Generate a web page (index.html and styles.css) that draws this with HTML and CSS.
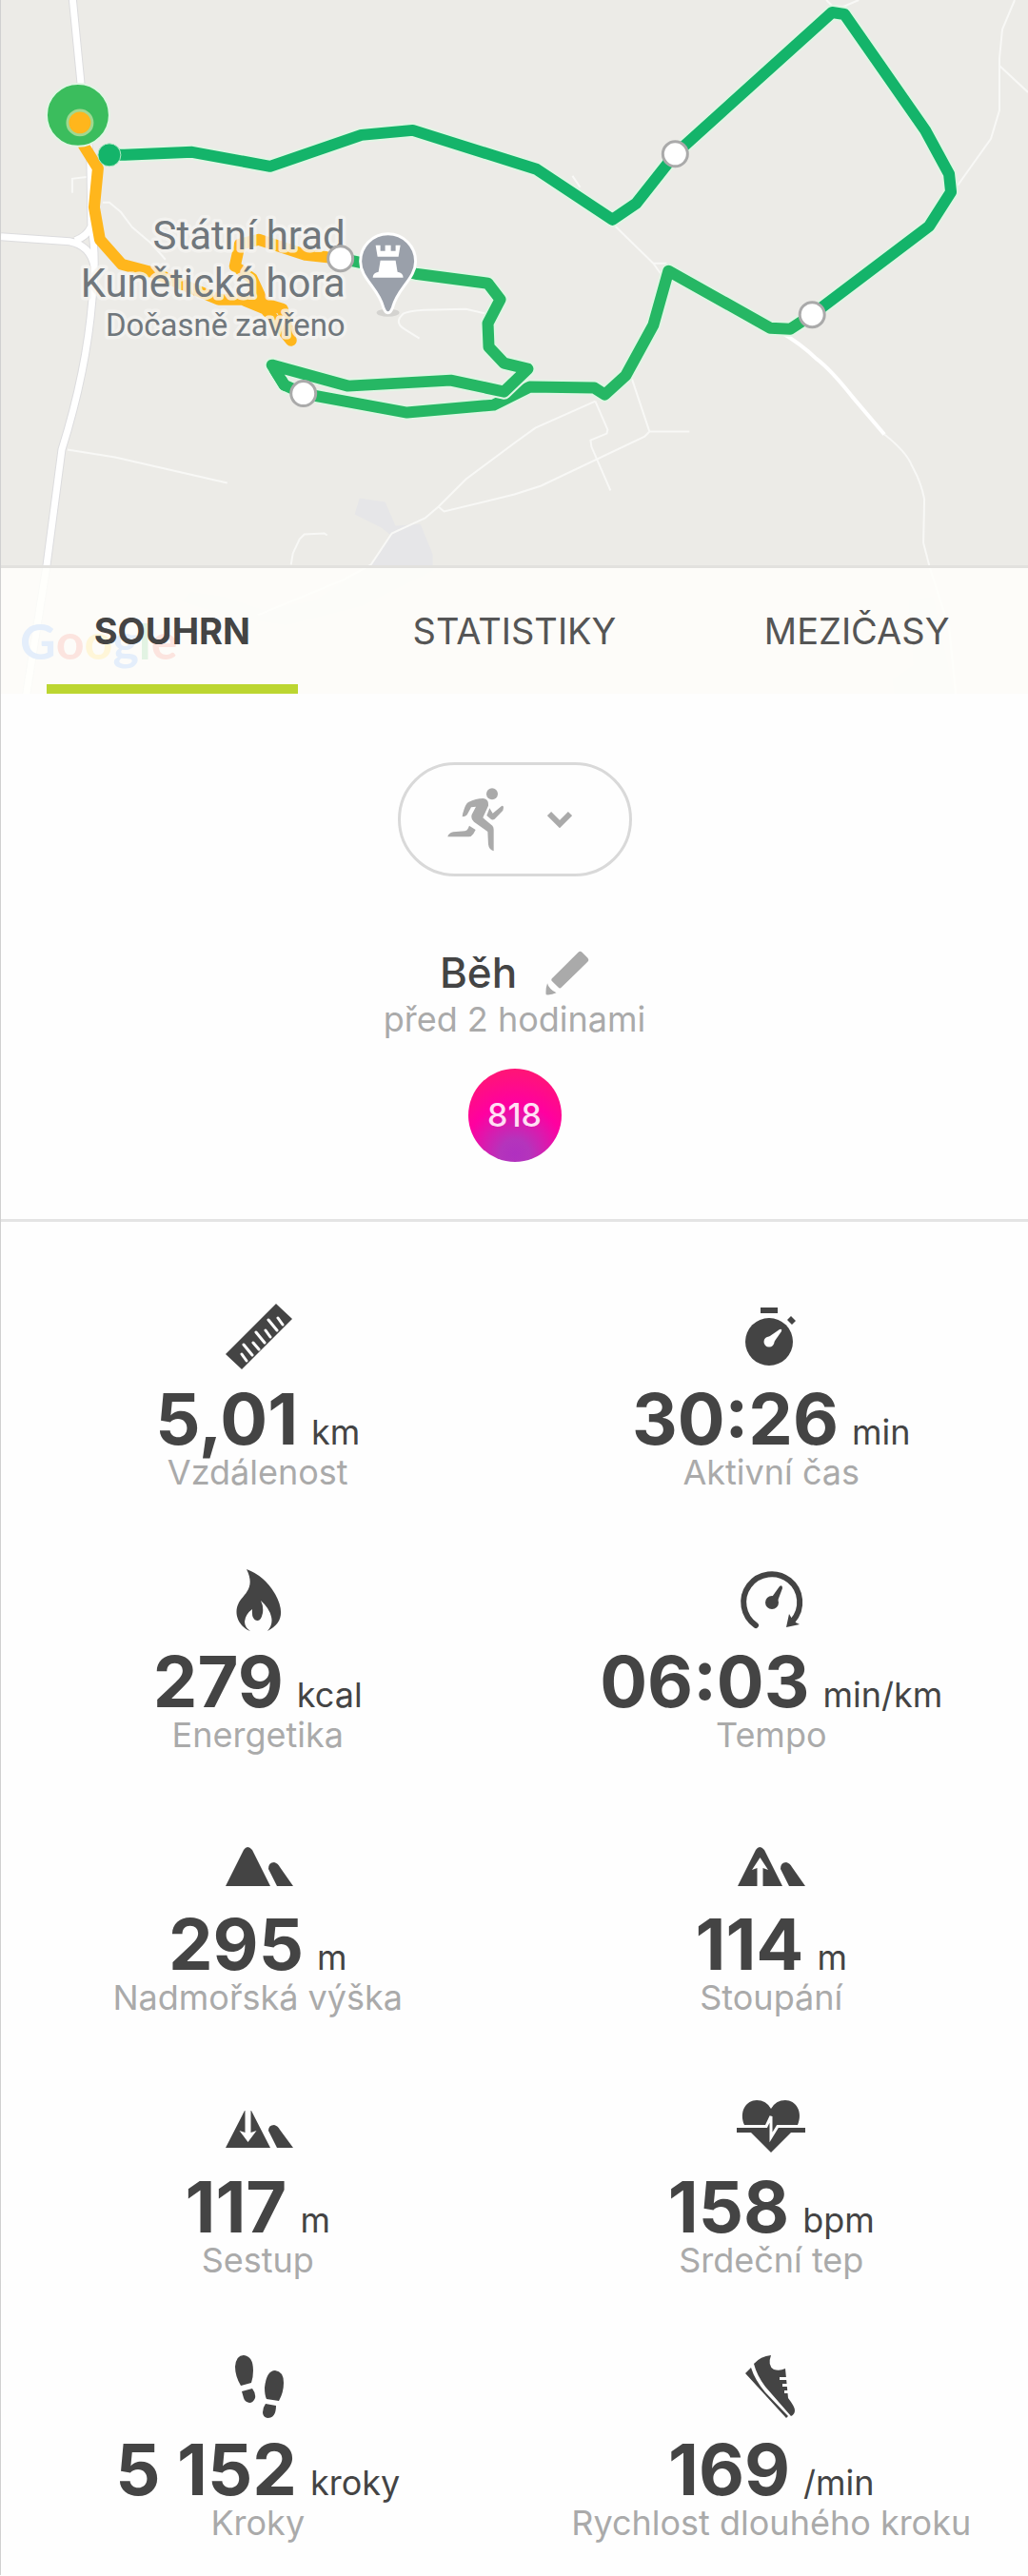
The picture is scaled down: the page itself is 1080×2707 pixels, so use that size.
FILE: index.html
```html
<!DOCTYPE html>
<html lang="cs">
<head>
    <meta charset="UTF-8">
    <meta name="viewport" content="width=device-width, initial-scale=1.0">
    <title>Běh - Souhrn</title>
    <link rel="stylesheet" href="styles.css">
</head>
<body>
    <header class="map">
        <svg class="map-canvas" viewBox="0 0 1080 730" role="img" aria-label="Mapa trasy">
            <!-- water -->
            <path class="water" d="M377 524L404 528L415 553L441 551L454 583L454 600L379 637L300 657L240 648L190 632L200 623L235 628L275 642L330 632L389 594L410 563L400 555L372 541Z"/>
            <path class="water" d="M955 632L980 628L1002 730L940 730L938 715L960 700Z"/>

            <!-- paths and roads -->
            <g class="path">
                <path d="M75 203V188L92 186M107 213H114L126 223L138 239L158 256L173 273"/>
                <path d="M440 356L424 346Q413 339 423 330Q428 327 445 326L489 325L510 330"/>
                <path d="M1066 0L1053 31L1050 61V116L1041 146L1006 195M1050 69L1080 97"/>
                <path d="M868 0L874 6L886 7L902 0M601 185L609 197M645 237L686 277H700M686 277L696 291"/>
                <path d="M625 422L562 450L540 466L489 504L460 533L446 545L411 561L389 594L360 610L270 647"/>
                <path d="M625 422L638 452L637 456L620 463L621 470L641 516"/>
                <path d="M663 397L674 430L682 454H724M682 454L677 459L568 511L540 520L466 538L460 533"/>
                <path d="M305 594L307 582L314 567L319 562L340 561L343 563M70 473L120 481L238 508"/>
                <path d="M929 457Q952 475 958 490Q968 508 971 525L970 571L977 598L997 660L1004 730"/>
            </g>
            <path class="lane" d="M818 348Q842 362 857 377Q872 388 895 417L929 457"/>
            <path class="road-edge" d="M75 -5L84 87L94 168L95 240Q101 268 96 315Q90 390 64 473L48 595L26 735M0 249L72 254Q94 258 98 280M78 253Q90 249 95 238"/>
            <path class="road" d="M75 -5L84 87L94 168L95 240Q101 268 96 315Q90 390 64 473L48 595L26 735M0 249L72 254Q94 258 98 280M78 253Q90 249 95 238"/>

            <!-- recorded track -->
            <polyline class="track-halo" points="114,163 130,163 201,160 283,175 379,142 433,137 563,178 643,231 668,214 709,162 874,13 887,15 972,137 997,183 999,202 976,238 853,331 830,346 809,345 702,285 686,342 657,395 635,415 624,408 556,407 518,426 427,434 318,414 298,405 285,384"/>
            <polyline class="track track-green" points="114,163 130,163 201,160 283,175 379,142 433,137 563,178 643,231 668,214 709,162 874,13 887,15 972,137 997,183 999,202 976,238 853,331"/>
            <polyline class="track track-light" points="853,331 830,346 809,345 702,285 686,342 657,395 635,415 624,408 556,407 518,426 427,434 318,414 298,405 285,384"/>
            <polyline class="track-halo" points="285,384 365,406 473,400 529,412 554,388 529,382 513,365 512,340 525,315 512,298 436,288 357,272"/>
            <polyline class="track track-light" points="298,405 285,384 365,406 473,400 529,412 554,388 529,382 513,365 512,340 525,315 512,298 436,288 357,272"/>
            <polyline class="track track-orange" points="357,272 320,268 271,252 251,257 246,280 264,293 276,319 296,325 305,358 278,325 254,315 229,315 161,287 127,278 104,252 98,218 102,177 87,153 83,129"/>
            <circle class="start" cx="81" cy="121" r="33"/>
            <circle class="start-dot" cx="83" cy="129" r="13"/>
            <circle class="finish-dot" cx="114" cy="163" r="12"/>

            <!-- castle label and pin -->
            <g class="place" text-anchor="end">
                <text x="362" y="262">Státní hrad</text>
                <text x="362" y="312">Kunětická hora</text>
                <text class="place-note" x="362" y="353">Dočasně zavřeno</text>
            </g>
            <ellipse class="pin-shadow" cx="407" cy="329" rx="12" ry="4"/>
            <path class="pin" d="M407 329Q404 329 402 323C397 303 378 293 378 275A29 29 0 0 1 436 275C436 293 417 303 412 323Q410 329 407 329Z"/>
            <path class="pin-castle" d="M394 258H399V264H404V258H410V264H415V258H420L418 270H396ZM399 274H415L417 286Q423 287 423 292H391Q391 287 397 286Z"/>

            <g class="km">
                <circle cx="357" cy="272" r="13"/>
                <circle cx="318" cy="414" r="13"/>
                <circle cx="709" cy="162" r="13"/>
                <circle cx="853" cy="331" r="13"/>
            </g>

            <text class="google" x="20" y="694"><tspan class="blue">G</tspan><tspan class="red">o</tspan><tspan class="yellow">o</tspan><tspan class="blue">g</tspan><tspan class="green">l</tspan><tspan class="red">e</tspan></text>
        </svg>
        <nav class="tabs">
            <button class="tab active" type="button">SOUHRN</button>
            <button class="tab" type="button">STATISTIKY</button>
            <button class="tab" type="button">MEZIČASY</button>
        </nav>
    </header>

    <section class="summary">
        <div class="sport">
            <select class="sport-select" aria-label="Sport">
                <option value="run" aria-label="Běh" selected></option>
            </select>
            <svg class="sport-icon" viewBox="0 0 180 200">
                <circle cx="141" cy="19" r="18"/>
                <path d="M66 45Q90 33 112 33Q131 35 129 56L112 94L142 119Q146 123 146 131V199Q131 195 129 178L127 138L84 107Q73 99 77 84L90 59L75 61L62 85Q57 91 47 91Q47 83 51 73Q57 51 66 45Z"/>
                <path d="M133 64L143 80L171 57Q177 55 177 62L175 71L149 98Q143 102 138 99L124 87Z"/>
                <path d="M69 119L89 132L82 145Q76 154 67 154H1Q3 143 18 139L55 136Q62 134 65 128Z"/>
            </svg>
            <svg class="sport-arrow" viewBox="0 0 26 18"><path d="M2 3L13 14L24 3"/></svg>
        </div>
        <div class="title-row">
            <h1>Běh</h1>
            <button class="edit" type="button" aria-label="Upravit">
                <svg viewBox="0 0 136 138">
                    <path d="M102 5Q108 0 114 5L131 22Q137 29 131 35L50 114Q45 119 40 114L21 95Q16 91 21 86Z"/>
                    <path d="M6 101Q10 118 34 131Q18 139 2 137Q0 118 6 101Z"/>
                </svg>
            </button>
        </div>
        <p class="time">před 2 hodinami</p>
        <span class="score">818</span>
    </section>

    <main class="stats">
        <div class="stat">
            <svg class="icon" viewBox="0 0 72 72">
                <path d="M55 2L72 18L19 71L2 55Z"/>
                <path class="cut" d="M19 55L24 62M21 45L30 56M31 43L37 50M34 32L43 43M44 30L49 37M47 19L56 30M57 17L62 24"/>
            </svg>
            <p class="value">5,01<span class="unit">km</span></p>
            <p class="label">Vzdálenost</p>
        </div>
        <div class="stat">
            <svg class="icon" viewBox="0 0 72 72">
                <circle cx="34" cy="42" r="25"/>
                <path d="M25 6H43V12H25ZM57 15L62 20L58 24L53 19Z"/>
                <circle class="hole" cx="34" cy="42" r="5.5"/>
                <path class="hole" d="M32 38L45 29Q48 28 47 31L38 44Z"/>
            </svg>
            <p class="value">30:26<span class="unit">min</span></p>
            <p class="label">Aktivní čas</p>
        </div>
        <div class="stat">
            <svg class="icon" viewBox="0 0 72 72">
                <path d="M24 5Q43 12 54 31C64 49 62 62 46 70Q52 63 50 55Q48 46 39 38Q42 44 41 51Q39 60 35 59Q29 58 30 47Q23 52 22 60Q22 66 28 70C15 65 10 51 16 40C21 31 34 25 24 5Z"/>
            </svg>
            <p class="value">279<span class="unit">kcal</span></p>
            <p class="label">Energetika</p>
        </div>
        <div class="stat">
            <svg class="icon" viewBox="0 0 72 72">
                <path class="line" d="M20 64A29.5 29.5 0 1 1 59 59"/>
                <path d="M52 66L55 52L58 57L62 61L66 63Z"/>
                <circle cx="37" cy="40" r="7"/>
                <path d="M35 37L45 23Q48 21 48 25L42 41Z"/>
            </svg>
            <p class="value">06:03<span class="unit">min/km</span></p>
            <p class="label">Tempo</p>
        </div>
        <div class="stat">
            <svg class="icon" viewBox="0 0 72 72">
                <path d="M2 62L21 24Q25 18 30 24L49 62ZM56 62L47 44Q47 37 53 37Q57 38 59 42L73 62Z"/>
            </svg>
            <p class="value">295<span class="unit">m</span></p>
            <p class="label">Nadmořská výška</p>
        </div>
        <div class="stat">
            <svg class="icon" viewBox="0 0 72 72">
                <path d="M1 62L20 24Q24 18 29 24L48 62ZM55 62L46 44Q46 37 52 37Q56 38 58 42L72 62Z"/>
                <path class="hole" d="M24.5 32L33 45L27.5 43V63H21.5V43L16 45Z"/>
            </svg>
            <p class="value">114<span class="unit">m</span></p>
            <p class="label">Stoupání</p>
        </div>
        <div class="stat">
            <svg class="icon" viewBox="0 0 72 72">
                <path d="M2 61L22 22H29L49 61ZM56 61L47 43Q47 37 53 37Q57 38 59 42L73 61Z"/>
                <path class="hole" d="M25.5 55L16.5 43L22.5 45V20H28.5V45L34.5 43Z"/>
            </svg>
            <p class="value">117<span class="unit">m</span></p>
            <p class="label">Sestup</p>
        </div>
        <div class="stat">
            <svg class="icon" viewBox="0 0 72 72">
                <path d="M8 37C2 23 10 11 21 11Q31 11 36 20Q41 11 51 11C62 11 70 23 64 37V40H72V45H57L36 66L15 45H0V40H8Z"/>
                <path class="pulse" d="M0 38.5H31L36 28V50L43 38.5H72"/>
            </svg>
            <p class="value">158<span class="unit">bpm</span></p>
            <p class="label">Srdeční tep</p>
        </div>
        <div class="stat">
            <svg class="icon" viewBox="0 0 72 72">
                <path d="M18 35Q12 25 12 15Q13 3 21 3Q31 4 31 19Q31 26 29 32ZM19 41L30 38Q34 43 33 48Q31 53 27 53Q22 52 21 48Z"/>
                <path d="M45 49Q43 45 43 37Q45 19 54 19Q63 20 63 32Q63 42 58 51ZM44 54L55 56Q55 69 46 69Q41 68 41 63Q41 58 44 54Z"/>
            </svg>
            <p class="value">5 152<span class="unit">kroky</span></p>
            <p class="label">Kroky</p>
        </div>
        <div class="stat">
            <svg class="icon" viewBox="0 0 72 72">
                <path d="M36 3Q25 4 18 12Q21 24 30 36L57 67Q61 65 61 61Q61 57 54 48L51 17Q45 20 39 18Q32 14 36 3ZM15 16L9 22L52 69L54 67L30 42Q19 29 15 16Z"/>
                <path class="hole" d="M45 26H54V29H45ZM48 33H55V36H48ZM50 40H56V43H50Z"/>
            </svg>
            <p class="value">169<span class="unit">/min</span></p>
            <p class="label">Rychlost dlouhého kroku</p>
        </div>
    </main>
</body>
</html>
```
FILE: styles.css
```css
* {
    box-sizing: border-box;
}
body {
    margin: 0;
    border-left: 1px solid #d0d0d0;
    background-color: #fefefe;
    color: #444;
    font-family: Inter, "Open Sans", sans-serif;
    text-align: center;
}
h1, p {
    margin: 0;
}
button {
    padding: 0;
    border: 0;
    background: none;
    font-family: inherit;
    cursor: pointer;
}

/* map */
.map {
    position: relative;
    background-color: #ecebe7;
}
.map-canvas {
    display: block;
    width: 100%;
    height: auto;
}
.water {
    fill: #e6e6e8;
}
.path {
    fill: none;
    stroke: #f8f8f6;
    stroke-width: 2;
}
.lane {
    fill: none;
    stroke: #fff;
    stroke-width: 4;
}
.road-edge {
    fill: none;
    stroke: #dcdcde;
    stroke-width: 9;
}
.road {
    fill: none;
    stroke: #fff;
    stroke-width: 7;
}
.track, .track-halo {
    fill: none;
    stroke-width: 12;
    stroke-linejoin: round;
    stroke-linecap: round;
}
.track-halo {
    stroke: #e0f6e4;
    stroke-width: 16;
}
.track-green {
    stroke: #14b46a;
}
.track-light {
    stroke: #26b764;
}
.track-orange {
    stroke: #ffb61c;
}
.start {
    fill: #3bbd5d;
    stroke: #e0f6e4;
    stroke-width: 2;
}
.start-dot {
    fill: #ffb61c;
    stroke: #a0d890;
    stroke-width: 3;
}
.finish-dot {
    fill: #14b46a;
    stroke: #b0e8c4;
    stroke-width: 1;
}
.place {
    fill: #70777c;
    stroke: #f6f5f2;
    stroke-opacity: 0.8;
    stroke-width: 7;
    stroke-linejoin: round;
    paint-order: stroke;
    font-family: Roboto, sans-serif;
    font-size: 42px;
}
.place-note {
    font-size: 33px;
}
.pin {
    fill: #9aa0aa;
    stroke: #fff;
    stroke-width: 3;
}
.pin-shadow {
    fill: #d4d3d0;
}
.pin-castle {
    fill: #fff;
}
.km {
    fill: #fff;
    stroke: #aaa;
    stroke-width: 3;
}
.google {
    font-family: Lato, sans-serif;
    font-size: 52px;
    font-weight: 700;
}
.blue {
    fill: #4285f4;
}
.red {
    fill: #ea4335;
}
.yellow {
    fill: #fbbc05;
}
.green {
    fill: #34a853;
}

/* tabs lie over the lower part of the map */
.tabs {
    position: absolute;
    left: 0;
    right: 0;
    bottom: 0;
    display: grid;
    grid-template-columns: repeat(3, 1fr);
    border-top: 3px solid #e2e1de;
    background-color: rgba(255, 255, 252, 0.86);
}
.tab {
    height: 132px;
    margin: 0 48px;
    padding-top: 10px;
    border-bottom: 10px solid transparent;
    color: #555;
    font-size: 38px;
}
.tab.active {
    border-bottom-color: #bcd631;
    color: #444;
    font-weight: 700;
}

/* summary */
.summary {
    display: flex;
    flex-direction: column;
    align-items: center;
    padding: 72px 0 60px;
    border-bottom: 3px solid #e4e4e4;
}
.sport {
    position: relative;
    width: 246px;
    height: 120px;
}
.sport-select {
    width: 100%;
    height: 100%;
    border: 3px solid #d9d9d9;
    border-radius: 60px;
    background: none;
    appearance: none;
}
.sport-icon, .sport-arrow {
    position: absolute;
    pointer-events: none;
}
.sport-icon {
    top: 27px;
    left: 52px;
    width: 60px;
    fill: #aaa;
}
.sport-arrow {
    top: 51px;
    left: 157px;
    width: 26px;
    fill: none;
    stroke: #aaa;
    stroke-width: 6;
}
.title-row {
    display: flex;
    align-items: center;
    gap: 30px;
    margin-top: 74px;
}
h1 {
    font-size: 44px;
    font-weight: 500;
    line-height: 54px;
}
.edit {
    width: 46px;
    height: 46px;
}
.edit svg {
    display: block;
    fill: #aaa;
}
.time {
    color: #aaa;
    font-size: 36px;
    line-height: 44px;
}
.score {
    width: 98px;
    height: 98px;
    margin-top: 30px;
    border-radius: 50%;
    background: radial-gradient(circle at 50% 92%, #b030c0 0%, #b434bc 15%, #ff00a0 52%, #ff1478 85%);
    color: #ffe0f4;
    font-size: 34px;
    font-weight: 500;
    line-height: 98px;
}

/* stats */
.stats {
    display: grid;
    grid-template-columns: repeat(2, 1fr);
    row-gap: 77px;
    padding: 84px 0 35px;
}
.icon {
    display: block;
    width: 72px;
    height: 72px;
    margin: 0 auto 15px;
    overflow: visible;
    fill: #444;
}
.cut, .pulse {
    fill: none;
    stroke: #fefefe;
    stroke-width: 3;
    stroke-linecap: round;
}
.line {
    fill: none;
    stroke: #444;
    stroke-width: 6;
    stroke-linecap: round;
}
.hole {
    fill: #fefefe;
}
.value {
    font-size: 74px;
    font-weight: 700;
    line-height: 72px;
}
.unit {
    margin-left: 14px;
    font-size: 36px;
    font-weight: 400;
    line-height: 36px;
}
.label {
    color: #aaa;
    font-size: 36px;
    line-height: 40px;
}
```
